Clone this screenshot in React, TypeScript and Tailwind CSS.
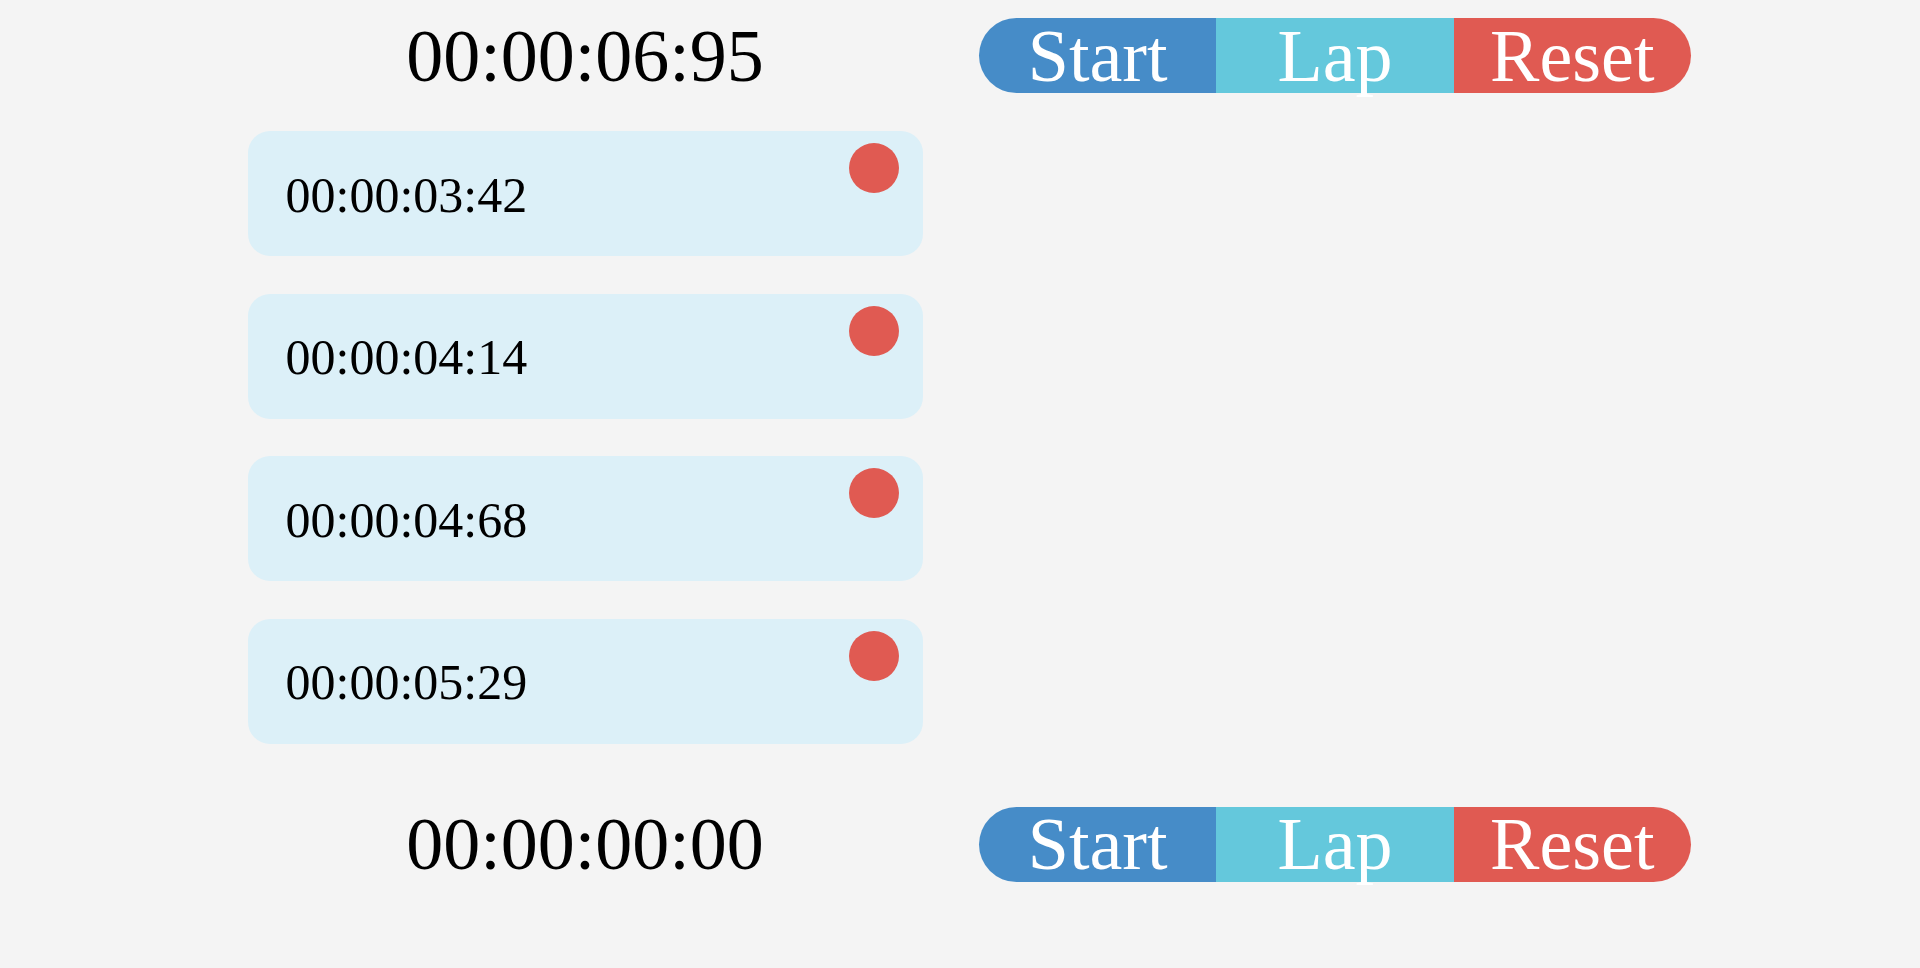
import React from 'react';

const laps = ['00:00:03:42', '00:00:04:14', '00:00:04:68', '00:00:05:29'];

function Controls() {
  return (
    <div className="mx-auto flex h-[75px] w-[712px] text-[74px] leading-none text-white">
      <button className="flex flex-1 items-center justify-center rounded-l-[38px] bg-[#468cc8]">Start</button>
      <button className="flex flex-1 items-center justify-center bg-[#64c8dc]">Lap</button>
      <button className="flex flex-1 items-center justify-center rounded-r-[38px] bg-[#e05a52]">Reset</button>
    </div>
  );
}

function TimerRow({ time }: { time: string }) {
  return (
    <div className="grid grid-cols-2 items-center">
      <div className="text-center text-[74px] leading-none text-black">{time}</div>
      <Controls />
    </div>
  );
}

function LapCard({ time }: { time: string }) {
  return (
    <li className="relative mx-auto flex h-[125px] w-[675px] items-center rounded-[22px] bg-[#dcf0f8] pl-[38px] pt-[2px] text-[50px] leading-none text-black">
      {time}
      <span className="absolute right-[24px] top-[12px] h-[50px] w-[50px] rounded-full bg-[#e05a52]" />
    </li>
  );
}

export default function App() {
  return (
    <div className="min-h-screen bg-[#f4f4f4]" style={{ fontFamily: '"Liberation Serif", "Times New Roman", serif' }}>
      <div className="mx-auto w-[1500px] pt-[18px]">
        <TimerRow time="00:00:06:95" />
        <div className="mt-[38px] grid grid-cols-2">
          <ul className="flex list-none flex-col gap-[37.5px] p-0">
            {laps.map((l, i) => <LapCard key={i} time={l} />)}
          </ul>
        </div>
        <div className="mt-[63px]">
          <TimerRow time="00:00:00:00" />
        </div>
      </div>
    </div>
  );
}
